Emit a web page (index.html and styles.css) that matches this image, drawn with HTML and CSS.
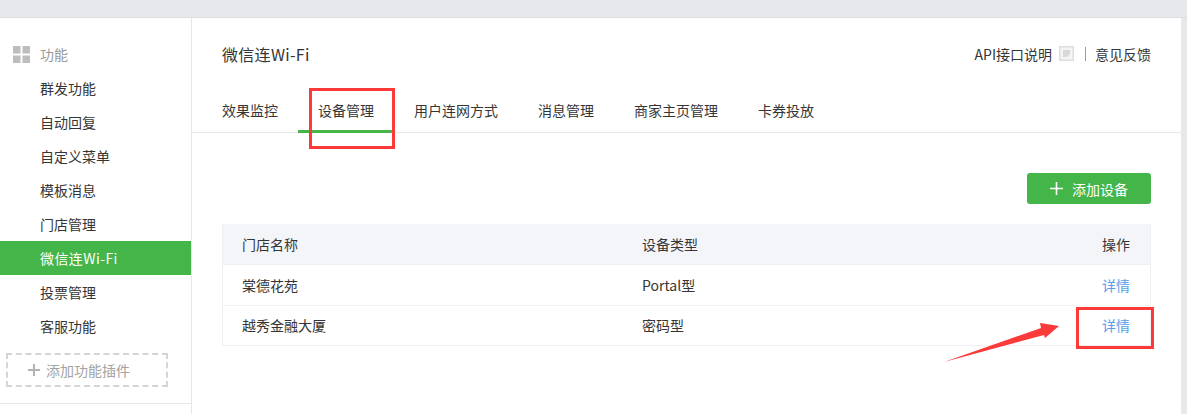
FILE: index.html
```html
<!DOCTYPE html>
<html lang="zh-CN">
<head>
<meta charset="utf-8">
<title>微信连Wi-Fi</title>
<link rel="stylesheet" href="styles.css">
</head>
<body>
<div class="topbar"></div>
<div class="layout">
  <aside class="sidebar">
    <div class="side-head">
      <svg class="grid-icon" width="17" height="17" viewBox="0 0 17 17"><rect width="7.5" height="7.5" fill="#bdbdbd"/><rect x="9.5" width="7.5" height="7.5" fill="#bdbdbd"/><rect y="9.5" width="7.5" height="7.5" fill="#bdbdbd"/><rect x="9.5" y="9.5" width="7.5" height="7.5" fill="#bdbdbd"/></svg>
      <span>功能</span>
    </div>
    <ul class="side-menu">
      <li>群发功能</li>
      <li>自动回复</li>
      <li>自定义菜单</li>
      <li>模板消息</li>
      <li>门店管理</li>
      <li class="active">微信连Wi-Fi</li>
      <li>投票管理</li>
      <li>客服功能</li>
    </ul>
    <div class="add-plugin"><svg class="plus" width="12" height="12" viewBox="0 0 12 12"><path d="M6 0v12M0 6h12" stroke="#b4b4b4" stroke-width="2"/></svg>添加功能插件</div>
    <div class="side-rule"></div>
  </aside>
  <main class="main">
    <header class="title-row">
      <h1>微信连Wi-Fi</h1>
      <div class="links">
        <span>API接口说明</span>
        <svg class="doc-icon" width="15" height="15" viewBox="0 0 15 15"><rect width="15" height="15" fill="#dedede"/><rect x="1.500" y="1.500" width="12" height="12" fill="#f4f4f4"/><path d="M4 4h7v4l-3 3H4z" fill="#d8d8d8"/></svg>
        <i class="sep"></i>
        <span>意见反馈</span>
      </div>
    </header>
    <nav class="tabs">
      <a>效果监控</a>
      <a class="on">设备管理</a>
      <a>用户连网方式</a>
      <a>消息管理</a>
      <a>商家主页管理</a>
      <a>卡券投放</a>
    </nav>
    <div class="toolbar">
      <button class="add-btn"><svg width="13" height="13" viewBox="0 0 13 13"><path d="M6.500 0v13M0 6.500h13" stroke="#fff" stroke-width="1.600"/></svg>添加设备</button>
    </div>
    <div class="table">
      <div class="tr th"><span>门店名称</span><span>设备类型</span><span class="r">操作</span></div>
      <div class="tr"><span>棠德花苑</span><span>Portal型</span><span class="r link">详情</span></div>
      <div class="tr"><span>越秀金融大厦</span><span>密码型</span><span class="r link">详情</span></div>
    </div>
  </main>
  <div class="gutter"></div>
</div>
<div class="mark mark-tab"></div>
<div class="mark mark-detail"></div>
<svg class="arrow" width="125" height="50" viewBox="0 0 125 50"><path d="M0 46 L97 12 L96 7 L115 10 L101 22 L100 19 Z" fill="#fd3a3a"/></svg>
</body>
</html>
```
FILE: styles.css
```css
* { box-sizing: border-box; }
html, body { margin: 0; padding: 0; }
body {
  width: 1187px;
  height: 414px;
  overflow: hidden;
  position: relative;
  background: #fff;
  color: #353535;
  font-family: "Noto Sans CJK SC", "Noto Sans", sans-serif;
  font-size: 14px;
}
.topbar { height: 18px; background: #e7e8eb; border-bottom: 1px solid #dcdde0; }
.layout { display: flex; height: 396px; }
.sidebar { width: 192px; flex: none; border-right: 1px solid #e7e7eb; }
.side-head { display: flex; align-items: center; height: 34px; margin-top: 19px; padding-left: 13px; color: #9a9a9a; }
.grid-icon { margin-right: 10px; }
.side-menu { list-style: none; margin: 0; padding: 0; }
.side-menu li { height: 34px; line-height: 34px; padding-left: 40px; }
.side-menu .active { background: #44b549; color: #fff; letter-spacing: 0.4px; }
.add-plugin {
  display: flex;
  align-items: center;
  width: 162px;
  height: 34px;
  margin: 10px 0 0 6px;
  padding-left: 20px;
  border: 2px dashed #d5d5d5;
  color: #a3a3a3;
}
.plus { margin-right: 6px; }
.side-rule { margin-top: 16px; border-top: 1px solid #e7e7eb; }
.main { flex: 1; min-width: 0; }
.title-row { display: flex; justify-content: space-between; align-items: center; height: 34px; margin-top: 19px; padding: 0 30px; }
h1 { margin: 0; font-size: 16px; font-weight: 400; letter-spacing: 0.3px; }
.links { display: flex; align-items: center; }
.doc-icon { margin: 0 7px 2px; }
.sep { width: 1px; height: 14px; background: #a09a94; margin: 0 9px 0 4px; }
.tabs { display: flex; height: 43px; margin-top: 19px; padding-left: 30px; border-bottom: 1px solid #e7e7eb; }
.tabs a { height: 43px; line-height: 40px; padding: 0 20px; }
.tabs a:first-child { padding-left: 0; }
.tabs .on { border-bottom: 3px solid #44b549; }
.toolbar { display: flex; justify-content: flex-end; margin-top: 40px; padding-right: 30px; }
.add-btn {
  display: flex;
  align-items: center;
  justify-content: center;
  gap: 9px;
  width: 124px;
  height: 31px;
  border: 0;
  border-radius: 3px;
  background: #44b549;
  color: #fff;
  font: inherit;
}
.table { margin: 20px 30px 0; border: 1px solid #f0f0f3; border-top: 0; }
.tr { display: grid; grid-template-columns: 400px 1fr 100px; align-items: center; height: 40px; padding: 0 20px 0 19px; border-top: 1px solid #f3f3f5; }
.tr:last-child { padding-bottom: 2px; }
.th { height: 41px; background: #f4f5f9; border-top: 0; border-bottom: 1px solid #eeeff3; }
.th + .tr { border-top: 0; }
.r { text-align: right; }
.link { color: #5a9ee8; }
.gutter { width: 6px; flex: none; background: #e7e8eb; }
.mark { position: absolute; border: 3px solid #fd3a3a; }
.mark-tab { left: 309px; top: 88px; width: 86px; height: 61px; }
.mark-detail { left: 1076px; top: 307px; width: 78px; height: 42px; }
.arrow { position: absolute; left: 944px; top: 316px; }
```
